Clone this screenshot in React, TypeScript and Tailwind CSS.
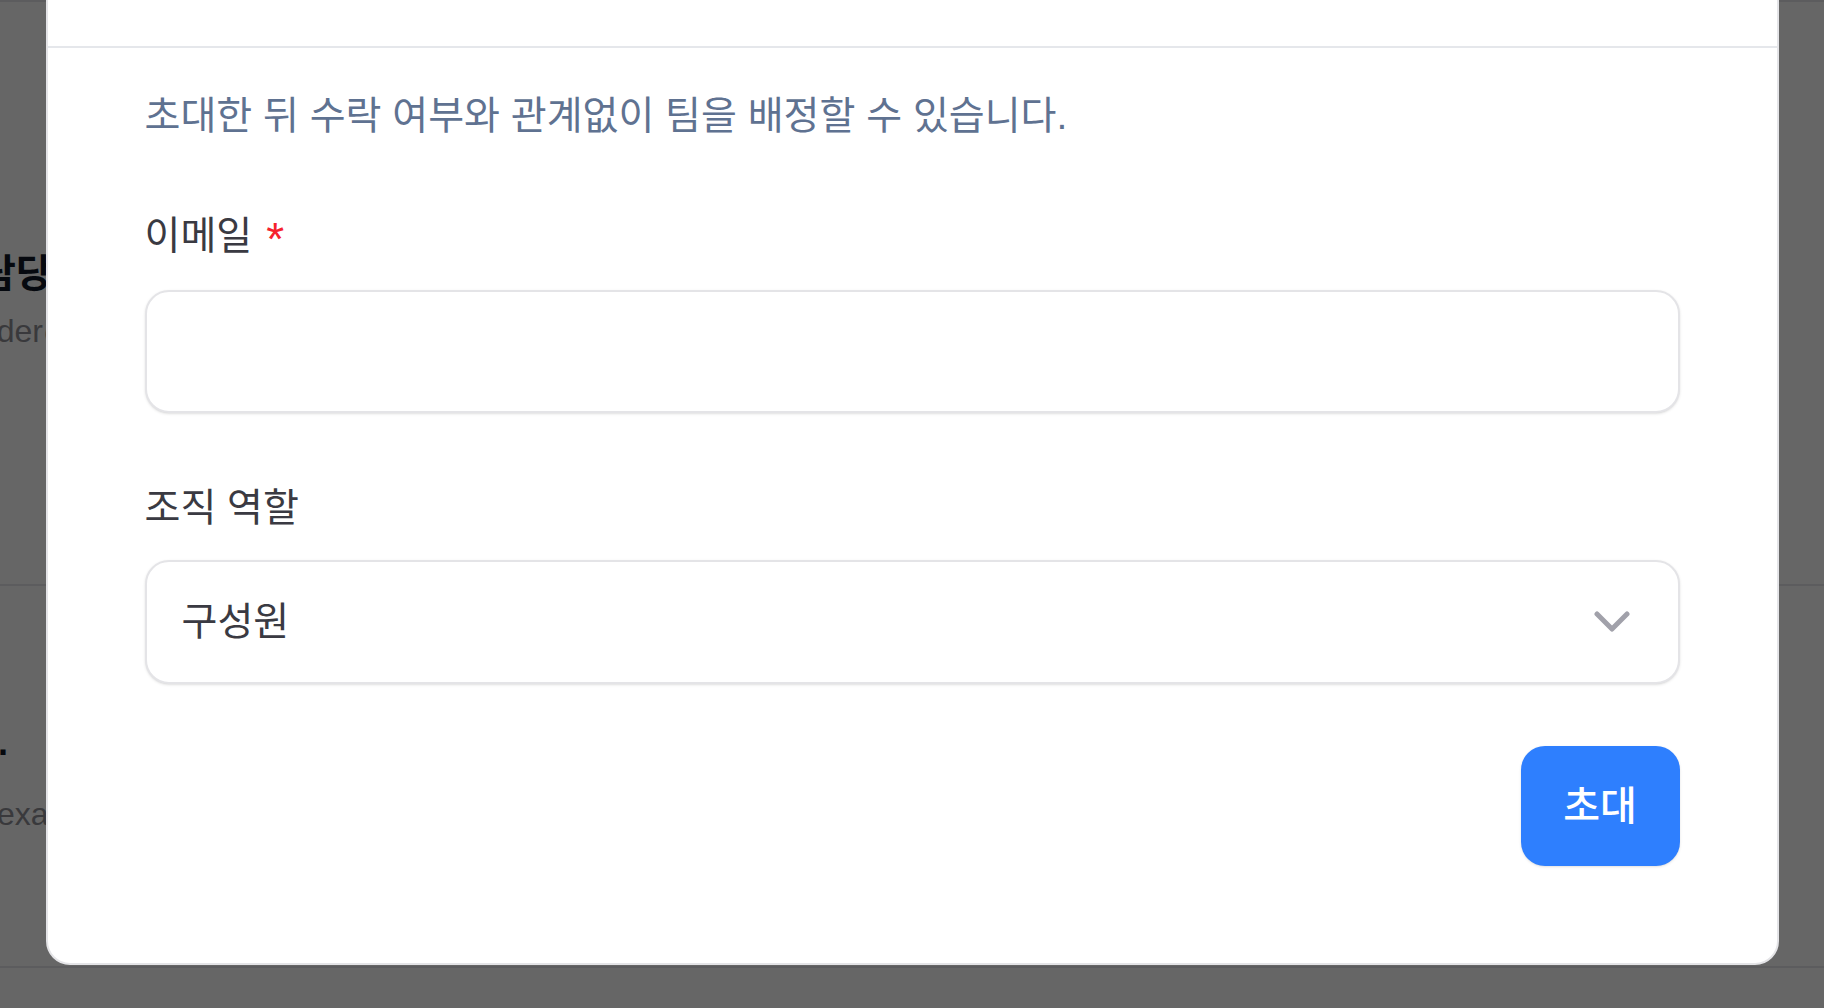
import React from 'react';

const rows = [
  { title: '담당자', titleClass: 'ml-[-20px] text-[39px]', sub: 'leader@example.com', subOffset: 'ml-[-46px]', rowClass: 'h-[584px] pt-[246px]', gap: 'mt-[11px]' },
  { title: 'Kim J.', titleClass: 'ml-[-100px] text-[36px]', sub: 'example@company.com', subOffset: 'ml-[-3px]', rowClass: 'h-[382px] pt-[131px]', gap: 'mt-[25px]' },
];

function ChevronDown() {
  return (
    <svg width="36" height="22" viewBox="0 0 36 22" fill="none" className="shrink-0">
      <path d="M3 3 L18 18 L33 3" stroke="#a1a1aa" strokeWidth="5" strokeLinecap="round" strokeLinejoin="round" />
    </svg>
  );
}

export default function App() {
  return (
    <div className="relative h-screen w-full overflow-hidden bg-white font-['Liberation_Sans','Noto_Sans_CJK_KR',sans-serif]">
      {/* page behind the dialog */}
      <div className="flex flex-col border-t-2 border-[#e5e7eb]">
        {rows.map((row) => (
          <div key={row.title} className={`flex flex-col border-b-2 border-[#e5e7eb] ${row.rowClass}`}>
            <div className={`whitespace-nowrap font-semibold leading-[52px] text-[#111827] ${row.titleClass}`}>
              {row.title}
            </div>
            <div className={`whitespace-nowrap text-[32px] leading-[40px] text-[#8f9096] ${row.gap} ${row.subOffset}`}>
              {row.sub}
            </div>
          </div>
        ))}
      </div>

      {/* overlay */}
      <div className="absolute inset-0 bg-black/60" />

      {/* dialog */}
      <div className="absolute inset-0 flex justify-center">
        <div className="mt-[-60px] h-fit w-[1733px] rounded-[24px] border-2 border-[#e4e4e7] bg-white">
          <div className="h-[106px] border-b-2 border-[#e5e7eb]" />

          <div className="px-[97px] pt-[42px] pb-[97px]">
            <p className="text-[39px] leading-[52px] text-[#5f7291]">
              초대한 뒤 수락 여부와 관계없이 팀을 배정할 수 있습니다.
            </p>

            <label className="mt-[68px] flex items-start gap-[14px] text-[39px] leading-[52px] text-[#3a3a42]">
              이메일
              <span className="mt-[6px] text-[46px] leading-[46px] text-[#f5222d]">*</span>
            </label>
            <input
              type="email"
              className="mt-[28px] block h-[123px] w-full rounded-[24px] border-2 border-[#e4e4e7] bg-white px-[35px] text-[39px] shadow-sm outline-none"
            />

            <label className="mt-[69px] block text-[39px] leading-[52px] text-[#3a3a42]">
              조직 역할
            </label>
            <div className="mt-[26px] flex h-[124px] items-center justify-between rounded-[24px] border-2 border-[#e4e4e7] bg-white pl-[35px] pr-[48px] shadow-sm">
              <span className="text-[39px] leading-[52px] text-[#3a3a42]">구성원</span>
              <ChevronDown />
            </div>

            <div className="mt-[62px] flex justify-end">
              <button className="h-[120px] w-[159px] rounded-[24px] bg-[#2e7ffe] text-[40px] font-medium text-white shadow-sm">
                초대
              </button>
            </div>
          </div>
        </div>
      </div>
    </div>
  );
}
